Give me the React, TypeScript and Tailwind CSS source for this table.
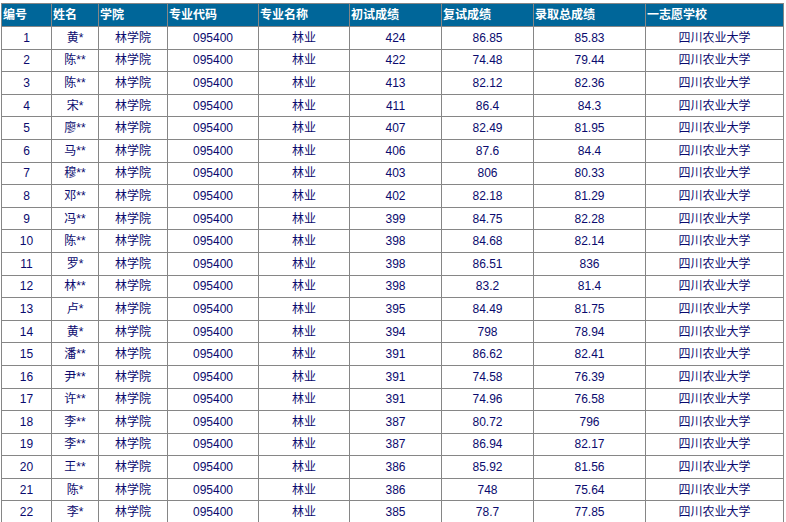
const heads = ['编号', '姓名', '学院', '专业代码', '专业名称', '初试成绩', '复试成绩', '录取总成绩', '一志愿学校']
const widths = [50, 47, 69, 91, 91, 92, 92, 112, 138]

const rows: [string, number, string, string][] = [
  ['黄*', 424, '86.85', '85.83'],
  ['陈**', 422, '74.48', '79.44'],
  ['陈**', 413, '82.12', '82.36'],
  ['宋*', 411, '86.4', '84.3'],
  ['廖**', 407, '82.49', '81.95'],
  ['马**', 406, '87.6', '84.4'],
  ['穆**', 403, '806', '80.33'],
  ['邓**', 402, '82.18', '81.29'],
  ['冯**', 399, '84.75', '82.28'],
  ['陈**', 398, '84.68', '82.14'],
  ['罗*', 398, '86.51', '836'],
  ['林**', 398, '83.2', '81.4'],
  ['卢*', 395, '84.49', '81.75'],
  ['黄*', 394, '798', '78.94'],
  ['潘**', 391, '86.62', '82.41'],
  ['尹**', 391, '74.58', '76.39'],
  ['许**', 391, '74.96', '76.58'],
  ['李**', 387, '80.72', '796'],
  ['李**', 387, '86.94', '82.17'],
  ['王**', 386, '85.92', '81.56'],
  ['陈*', 386, '748', '75.64'],
  ['李*', 385, '78.7', '77.85'],
]

export default function App() {
  return (
    <div className="w-[786px] h-[522px] overflow-hidden bg-white pt-[3px] pl-[1px] font-['Liberation_Sans','Noto_Sans_CJK_SC',sans-serif] text-[12px]">
      <table className="table-fixed border-collapse w-[782px]">
        <colgroup>
          {widths.map((w, i) => (
            <col key={i} style={{ width: w }} />
          ))}
        </colgroup>
        <thead>
          <tr className="h-[23px] bg-[#006699]">
            {heads.map((h) => (
              <th key={h} className="border border-[#868686] text-left font-bold text-white px-[1px] py-0 leading-[14px]">
                {h}
              </th>
            ))}
          </tr>
        </thead>
        <tbody className="text-[#0a0a6e]">
          {rows.map((r, i) => (
            <tr key={i} className="h-[22.6px]">
              <td className="border border-[#868686] text-center p-0 leading-[14px]">{i + 1}</td>
              <td className="border border-[#868686] text-center p-0 leading-[14px]">{r[0]}</td>
              <td className="border border-[#868686] text-center p-0 leading-[14px]">林学院</td>
              <td className="border border-[#868686] text-center p-0 leading-[14px]">095400</td>
              <td className="border border-[#868686] text-center p-0 leading-[14px]">林业</td>
              <td className="border border-[#868686] text-center p-0 leading-[14px]">{r[1]}</td>
              <td className="border border-[#868686] text-center p-0 leading-[14px]">{r[2]}</td>
              <td className="border border-[#868686] text-center p-0 leading-[14px]">{r[3]}</td>
              <td className="border border-[#868686] text-center p-0 leading-[14px]">四川农业大学</td>
            </tr>
          ))}
        </tbody>
      </table>
    </div>
  )
}
